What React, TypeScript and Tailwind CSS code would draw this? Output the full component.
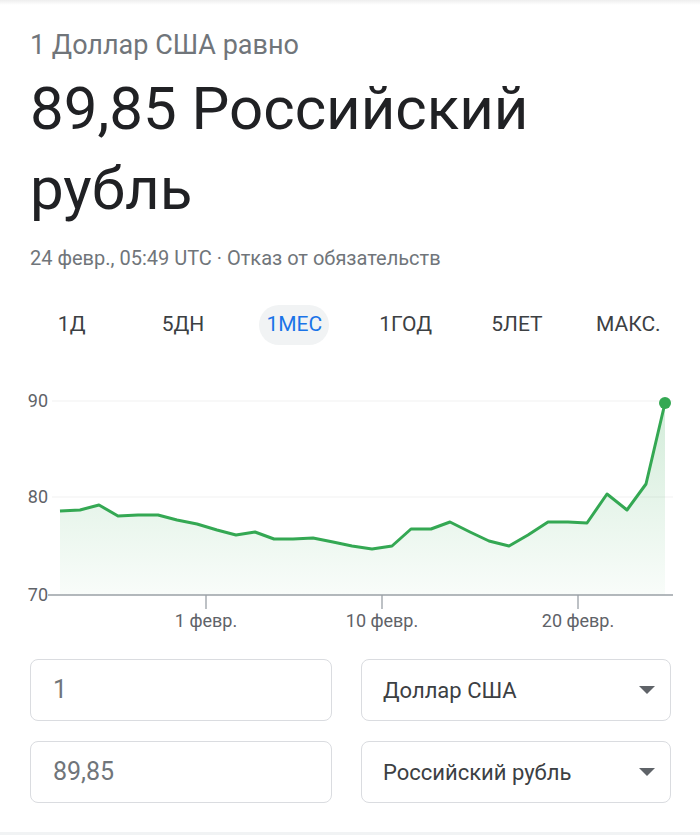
const pts: [number, number][] = [
  [60, 512], [80, 511], [99, 506], [118, 517], [138, 516], [158, 516], [177, 521], [197, 525],
  [217, 531], [236, 536], [255, 533], [274, 540], [293, 540], [313, 539], [333, 543], [352, 547],
  [372, 550], [392, 547], [411, 530], [431, 530], [450, 523], [470, 533], [489, 542], [509, 547],
  [528, 536], [548, 523], [568, 523], [587, 524], [607, 495], [627, 511], [646, 485], [665, 404],
];

const tabs = ['1Д', '5ДН', '1МЕС', '1ГОД', '5ЛЕТ', 'МАКС.'];

function Chart() {
  const line = pts.map(([x, y], i) => `${i ? 'L' : 'M'}${x} ${y}`).join(' ');
  const area = `${line} L665 596 L60 596 Z`;
  return (
    <svg width="700" height="260" viewBox="0 380 700 260" className="block">
      <defs>
        <linearGradient id="fill" x1="0" y1="0" x2="0" y2="1">
          <stop offset="0%" stopColor="#34a853" stopOpacity="0.22" />
          <stop offset="100%" stopColor="#34a853" stopOpacity="0.03" />
        </linearGradient>
      </defs>
      <line x1="52" y1="402" x2="673" y2="402" stroke="#f1f1f1" strokeWidth="1" />
      <line x1="52" y1="498" x2="673" y2="498" stroke="#f1f1f1" strokeWidth="1" />
      <path d={area} fill="url(#fill)" />
      <line x1="48" y1="596" x2="673" y2="596" stroke="#9aa0a6" strokeWidth="1.3" />
      {[206, 382, 578].map((x) => (
        <line key={x} x1={x} y1="596" x2={x} y2="610" stroke="#9aa0a6" strokeWidth="1.3" />
      ))}
      <path d={line} fill="none" stroke="#34a853" strokeWidth="3" strokeLinejoin="round" />
      <circle cx="665" cy="404" r="6" fill="#34a853" />
      <g fill="#5f6368" fontSize="18" fontFamily="Roboto, sans-serif">
        <text x="48" y="408" textAnchor="end">90</text>
        <text x="48" y="504" textAnchor="end">80</text>
        <text x="48" y="602" textAnchor="end">70</text>
        <text x="206" y="628" textAnchor="middle">1 февр.</text>
        <text x="382" y="628" textAnchor="middle">10 февр.</text>
        <text x="578" y="628" textAnchor="middle">20 февр.</text>
      </g>
    </svg>
  );
}

function Field({ value }: { value: string }) {
  return (
    <div className="h-[62px] rounded-lg border border-[#dadce0] flex items-center px-[22px] text-[25px] text-[#70757a]">
      {value}
    </div>
  );
}

function Select({ label }: { label: string }) {
  return (
    <div className="h-[62px] rounded-lg border border-[#dadce0] flex items-center justify-between pl-[21px] pr-[14px] text-[22px] text-[#3c4043]">
      <span>{label}</span>
      <svg width="18" height="10" viewBox="0 0 18 10">
        <path d="M1 1 L17 1 L9 9 Z" fill="#5f6368" />
      </svg>
    </div>
  );
}

export default function App() {
  return (
    <div className="w-[700px] h-[835px] bg-white overflow-hidden relative" style={{ fontFamily: 'Roboto, "Noto Sans", sans-serif' }}>
      <div className="h-[5px] bg-gradient-to-b from-[#eeeeee] to-white" />
      <div className="px-[30px]">
        <div className="mt-[22px] text-[27px] leading-[36px] text-[#70757a]">1 Доллар США равно</div>
        <div className="mt-[6px] text-[60px] leading-[80px] text-[#202124]">
          89,85 Российский
          <br />
          рубль
        </div>
        <div className="mt-[16px] text-[20px] leading-[26px] text-[#70757a]">24 февр., 05:49 UTC · Отказ от обязательств</div>
      </div>
      <div className="mt-[34px] grid grid-cols-6 px-[16px] items-center">
        {tabs.map((t) => (
          <div key={t} className="flex justify-center">
            <div
              className={
                t === '1МЕС'
                  ? 'h-[40px] px-[7px] rounded-full bg-[#f1f3f4] text-[#1a73e8] flex items-center text-[21px]'
                  : 'h-[40px] flex items-center text-[21px] text-[#3c4043]'
              }
            >
              {t}
            </div>
          </div>
        ))}
      </div>
      <div className="mt-[34px]">
        <Chart />
      </div>
      <div className="mt-[20px] px-[30px] grid grid-cols-[302px_310px] gap-x-[29px] gap-y-[20px]">
        <Field value="1" />
        <Select label="Доллар США" />
        <Field value="89,85" />
        <Select label="Российский рубль" />
      </div>
      <div className="absolute left-0 right-0 bottom-0 h-[3px] bg-[#f1f3f4]" />
    </div>
  );
}
